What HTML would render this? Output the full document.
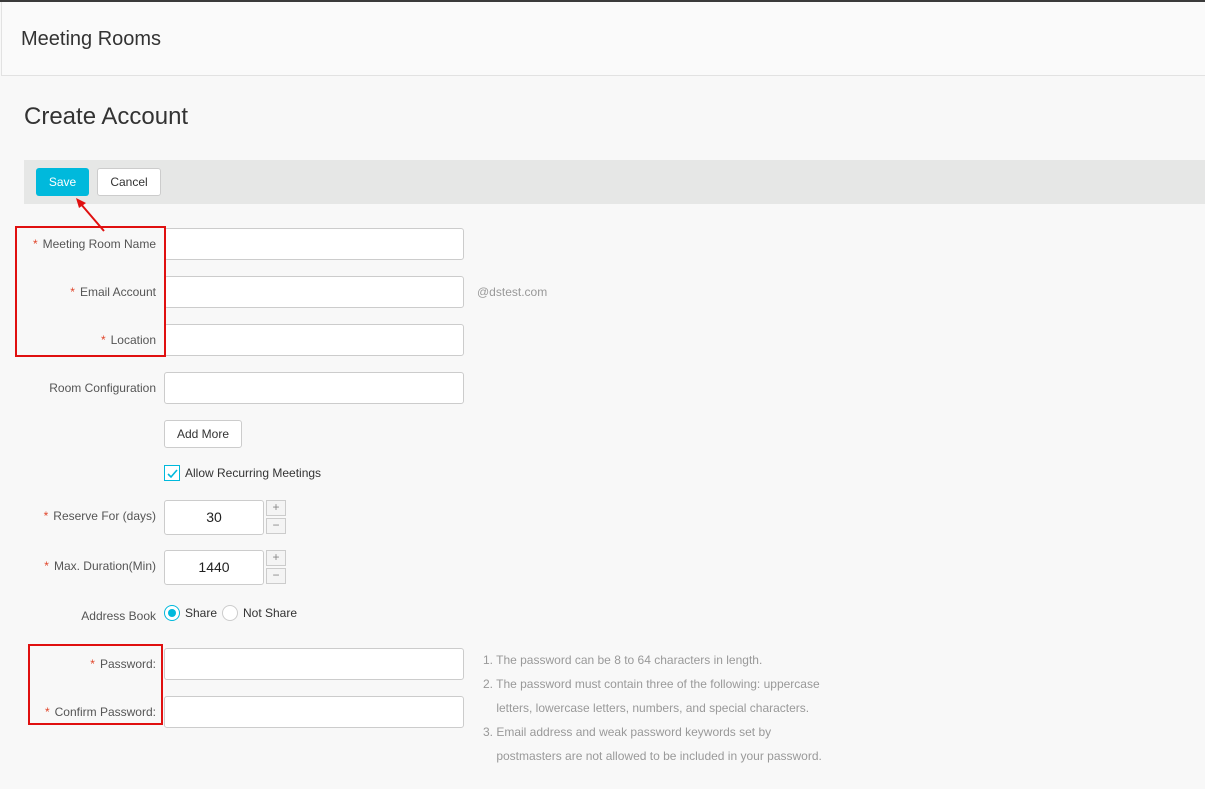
<!DOCTYPE html>
<html><head><meta charset="utf-8"><style>
body{margin:0;width:1205px;height:789px;background:#f8f8f8;font-family:"Liberation Sans",sans-serif;position:relative;overflow:hidden;color:#333}
.a{position:absolute}
.lbl{position:absolute;right:1049px;font-size:12px;color:#555;white-space:nowrap}
.lbl i{color:#e0452a;font-style:normal;margin-right:5px}
.in{position:absolute;left:164px;width:298px;height:30px;border:1px solid #ccc;border-radius:3px;background:#fff}
.num{position:absolute;left:164px;width:98px;height:33px;border:1px solid #ccc;border-radius:3px;background:#fff;text-align:center;line-height:33px;font-size:14px;color:#222}
.sp{position:absolute;left:266px;width:18px;height:14px;border:1px solid #ccc;background:#f4f4f4;color:#888;font-size:12px;text-align:center;line-height:13px}
.tip{position:absolute;left:483px;font-size:12px;color:#999;line-height:24px}
.red{position:absolute;border:2px solid #e01010}
</style></head><body>
<div class="a" style="left:0;top:0;width:1205px;height:2px;background:#3a3a3a"></div>
<div class="a" style="left:1px;top:2px;width:1204px;height:73px;background:#fafafa;border-left:1px solid #e2e2e2;border-bottom:1px solid #e2e2e2"></div>
<div class="a" style="left:21px;top:28px;font-size:20px;color:#333">Meeting Rooms</div>
<div class="a" style="left:24px;top:103px;font-size:24px;color:#333">Create Account</div>
<div class="a" style="left:24px;top:160px;width:1181px;height:44px;background:#e6e7e6"></div>
<div class="a" style="left:36px;top:168px;width:53px;height:28px;background:#00b9dc;border-radius:3px;color:#fff;font-size:12px;text-align:center;line-height:28px">Save</div>
<div class="a" style="left:97px;top:168px;width:62px;height:26px;background:#fff;border:1px solid #ccc;border-radius:3px;font-size:12px;text-align:center;line-height:26px">Cancel</div>
<svg class="a" style="left:70px;top:195px" width="40" height="40"><line x1="34" y1="36" x2="10" y2="8" stroke="#e01010" stroke-width="2"/><polygon points="6,3 16,8 9,13" fill="#e01010"/></svg>

<div class="lbl" style="top:237px"><i>*</i>Meeting Room Name</div><div class="in" style="top:228px"></div>
<div class="lbl" style="top:285px"><i>*</i>Email Account</div><div class="in" style="top:276px"></div>
<div class="a" style="left:477px;top:285px;font-size:12px;color:#999">@dstest.com</div>
<div class="lbl" style="top:333px"><i>*</i>Location</div><div class="in" style="top:324px"></div>
<div class="lbl" style="top:381px">Room Configuration</div><div class="in" style="top:372px"></div>
<div class="a" style="left:164px;top:420px;width:76px;height:26px;border:1px solid #ccc;border-radius:3px;background:#fff;font-size:12px;text-align:center;line-height:26px">Add More</div>
<div class="a" style="left:164px;top:465px;width:14px;height:14px;border:1px solid #00b9dc;background:#fff"></div>
<svg class="a" style="left:165px;top:466px" width="14" height="14"><path d="M3 8 L6 11 L12 4" stroke="#00b9dc" stroke-width="1.6" fill="none"/></svg>
<div class="a" style="left:185px;top:466px;font-size:12px">Allow Recurring Meetings</div>
<div class="lbl" style="top:509px"><i>*</i>Reserve For (days)</div><div class="num" style="top:500px">30</div>
<div class="sp" style="top:500px">+</div><div class="sp" style="top:518px">−</div>
<div class="lbl" style="top:559px"><i>*</i>Max. Duration(Min)</div><div class="num" style="top:550px">1440</div>
<div class="sp" style="top:550px">+</div><div class="sp" style="top:568px">−</div>
<div class="lbl" style="top:609px">Address Book</div>
<div class="a" style="left:164px;top:605px;width:14px;height:14px;border:1px solid #00b9dc;border-radius:50%;background:#fff"></div>
<div class="a" style="left:168px;top:609px;width:8px;height:8px;border-radius:50%;background:#00b9dc"></div>
<div class="a" style="left:185px;top:606px;font-size:12px">Share</div>
<div class="a" style="left:222px;top:605px;width:14px;height:14px;border:1px solid #ccc;border-radius:50%;background:#fff"></div>
<div class="a" style="left:243px;top:606px;font-size:12px">Not Share</div>
<div class="lbl" style="top:657px"><i>*</i>Password:</div><div class="in" style="top:648px"></div>
<div class="lbl" style="top:705px"><i>*</i>Confirm Password:</div><div class="in" style="top:696px"></div>
<div class="tip" style="top:648px">1. The password can be 8 to 64 characters in length.<br>2. The password must contain three of the following: uppercase<br>&nbsp;&nbsp;&nbsp;&nbsp;letters, lowercase letters, numbers, and special characters.<br>3. Email address and weak password keywords set by<br>&nbsp;&nbsp;&nbsp;&nbsp;postmasters are not allowed to be included in your password.</div>
<div class="red" style="left:15px;top:226px;width:147px;height:127px"></div>
<div class="red" style="left:28px;top:644px;width:131px;height:77px"></div>
</body></html>
